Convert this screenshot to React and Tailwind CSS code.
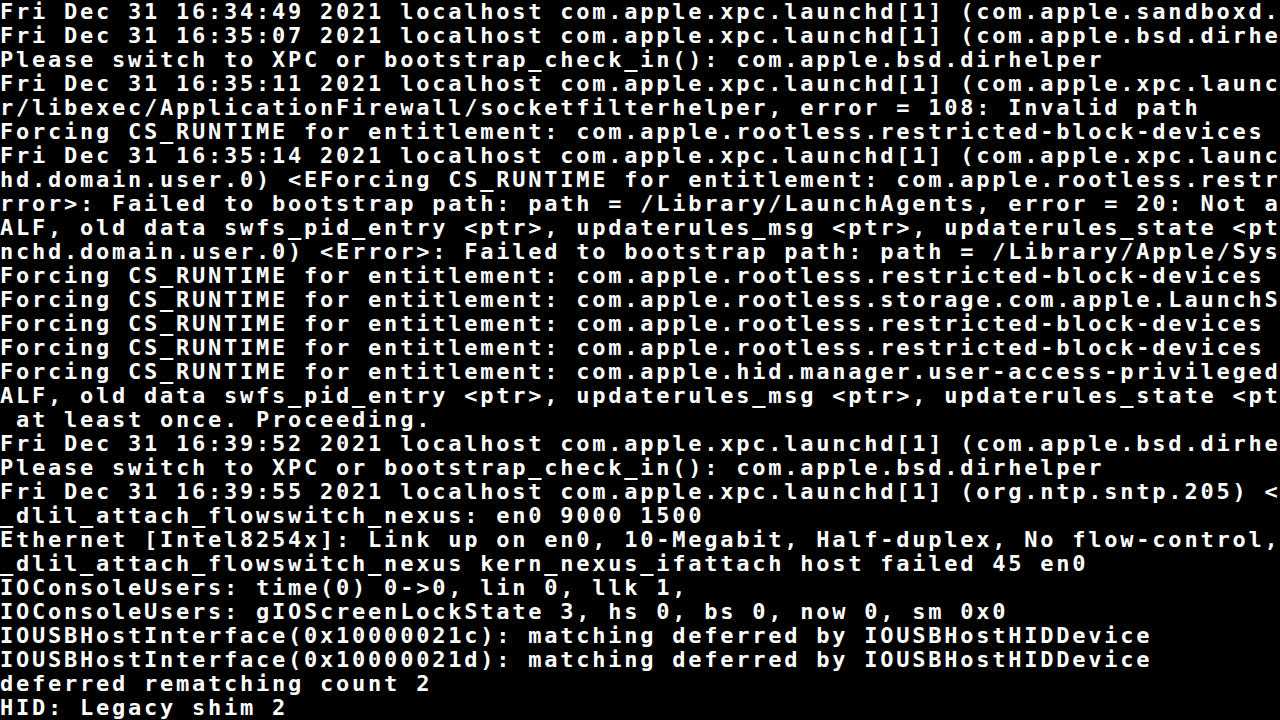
const lines = [
  "Fri Dec 31 16:34:49 2021 localhost com.apple.xpc.launchd[1] (com.apple.sandboxd.1",
  "Fri Dec 31 16:35:07 2021 localhost com.apple.xpc.launchd[1] (com.apple.bsd.dirhel",
  "Please switch to XPC or bootstrap_check_in(): com.apple.bsd.dirhelper",
  "Fri Dec 31 16:35:11 2021 localhost com.apple.xpc.launchd[1] (com.apple.xpc.launch",
  "r/libexec/ApplicationFirewall/socketfilterhelper, error = 108: Invalid path",
  "Forcing CS_RUNTIME for entitlement: com.apple.rootless.restricted-block-devices",
  "Fri Dec 31 16:35:14 2021 localhost com.apple.xpc.launchd[1] (com.apple.xpc.launch",
  "hd.domain.user.0) <EForcing CS_RUNTIME for entitlement: com.apple.rootless.restri",
  "rror>: Failed to bootstrap path: path = /Library/LaunchAgents, error = 20: Not a ",
  "ALF, old data swfs_pid_entry <ptr>, updaterules_msg <ptr>, updaterules_state <ptr",
  "nchd.domain.user.0) <Error>: Failed to bootstrap path: path = /Library/Apple/Syst",
  "Forcing CS_RUNTIME for entitlement: com.apple.rootless.restricted-block-devices",
  "Forcing CS_RUNTIME for entitlement: com.apple.rootless.storage.com.apple.LaunchSe",
  "Forcing CS_RUNTIME for entitlement: com.apple.rootless.restricted-block-devices",
  "Forcing CS_RUNTIME for entitlement: com.apple.rootless.restricted-block-devices",
  "Forcing CS_RUNTIME for entitlement: com.apple.hid.manager.user-access-privileged",
  "ALF, old data swfs_pid_entry <ptr>, updaterules_msg <ptr>, updaterules_state <ptr",
  " at least once. Proceeding.",
  "Fri Dec 31 16:39:52 2021 localhost com.apple.xpc.launchd[1] (com.apple.bsd.dirhel",
  "Please switch to XPC or bootstrap_check_in(): com.apple.bsd.dirhelper",
  "Fri Dec 31 16:39:55 2021 localhost com.apple.xpc.launchd[1] (org.ntp.sntp.205) <E",
  "_dlil_attach_flowswitch_nexus: en0 9000 1500",
  "Ethernet [Intel8254x]: Link up on en0, 10-Megabit, Half-duplex, No flow-control,",
  "_dlil_attach_flowswitch_nexus kern_nexus_ifattach host failed 45 en0",
  "IOConsoleUsers: time(0) 0->0, lin 0, llk 1,",
  "IOConsoleUsers: gIOScreenLockState 3, hs 0, bs 0, now 0, sm 0x0",
  "IOUSBHostInterface(0x10000021c): matching deferred by IOUSBHostHIDDevice",
  "IOUSBHostInterface(0x10000021d): matching deferred by IOUSBHostHIDDevice",
  "deferred rematching count 2",
  "HID: Legacy shim 2",
];

export default function App() {
  return (
    <div className="w-[1280px] h-[720px] bg-black overflow-hidden">
      <div className="flex flex-col font-['DejaVu_Sans_Mono',monospace] font-bold text-[22px] leading-[24px] tracking-[2.76px] text-white">
        {lines.map((line, i) => (
          <div key={i} className="h-[24px] whitespace-pre overflow-hidden">
            {line}
          </div>
        ))}
      </div>
    </div>
  );
}
